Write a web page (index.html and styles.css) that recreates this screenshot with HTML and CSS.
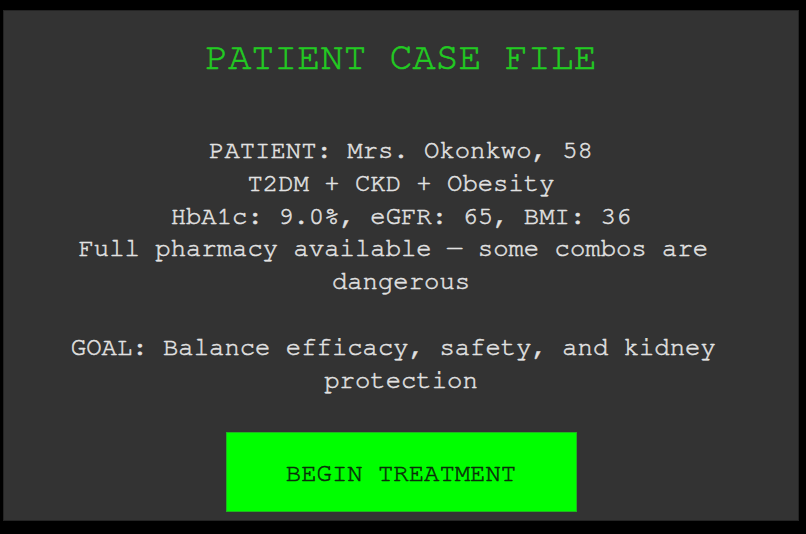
FILE: index.html
```html
<!DOCTYPE html>
<html lang="en">
<head>
<meta charset="utf-8">
<title>Patient Case File</title>
<link rel="stylesheet" href="styles.css">
</head>
<body>
<main class="panel">
  <h1 class="title">PATIENT CASE FILE</h1>
  <div class="brief">
    <p class="para">PATIENT: Mrs. Okonkwo, 58<br>T2DM + CKD + Obesity<br>HbA1c: 9.0%, eGFR: 65, BMI: 36<br>Full pharmacy available — some combos are dangerous</p>
    <p class="para">GOAL: Balance efficacy, safety, and kidney protection</p>
  </div>
  <button class="start-btn" type="button">BEGIN TREATMENT</button>
</main>
</body>
</html>
```

FILE: styles.css
```css
html, body {
  margin: 0;
  padding: 0;
  background: #000;
}
body {
  padding: 10px 0 0 3px;
  font-family: "Nimbus Mono PS", "Nimbus Mono L", "FreeMono", "Courier 10 Pitch", "Liberation Mono", monospace;
  overflow: hidden;
}
.panel {
  box-sizing: border-box;
  width: 796px;
  height: 511px;
  background: #333;
  border: 1px solid #242424;
  padding: 27px 40px 0;
  display: flex;
  flex-direction: column;
  align-items: center;
  text-align: center;
}
.title {
  margin: 0;
  font-size: 38.4px;
  font-weight: normal;
  line-height: normal;
  color: #22cc22;
  -webkit-text-stroke: 0.6px #22cc22;
}
.brief {
  margin-top: 58px;
  display: flex;
  flex-direction: column;
  gap: 32.8px;
}
.para {
  margin: 0;
  font-size: 25.6px;
  line-height: 32.8px;
  color: #e2e2e2;
  -webkit-text-stroke: 0.5px #e2e2e2;
  white-space: break-spaces;
}
.start-btn {
  margin-top: 35px;
  box-sizing: border-box;
  width: 351px;
  height: 80px;
  padding: 3px 0 0;
  background: #00ff00;
  border: 1px solid #1fb51f;
  font-family: inherit;
  font-size: 25.6px;
  color: #0a2e0a;
  -webkit-text-stroke: 0.5px #0a2e0a;
  display: flex;
  align-items: center;
  justify-content: center;
}
```
